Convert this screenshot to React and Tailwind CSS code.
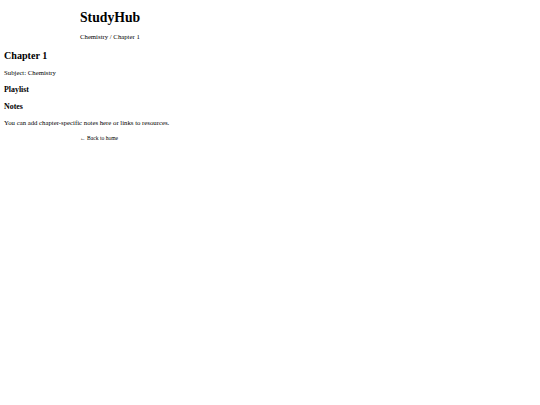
export default function App() {
  return (
    <div className="min-h-[405px] bg-white text-black font-['Liberation_Serif',serif]">
      <header className="pl-[80px]">
        <h1 className="pt-[10px] text-[13.7px] leading-[16px] font-bold">StudyHub</h1>
        <p className="mt-[7px] text-[6.75px] leading-[8px]">Chemistry / Chapter 1</p>
      </header>

      <main className="px-[4px]">
        <h2 className="mt-[9px] text-[10.1px] leading-[12px] font-bold">Chapter 1</h2>
        <p className="mt-[7px] text-[6.75px] leading-[8px]">Subject: Chemistry</p>

        <h3 className="mt-[7.5px] text-[7.9px] leading-[9px] font-bold">Playlist</h3>

        <h3 className="mt-[8px] text-[7.9px] leading-[9px] font-bold">Notes</h3>
        <p className="mt-[8.5px] text-[6.75px] leading-[8px]">
          You can add chapter-specific notes here or links to resources.
        </p>
      </main>

      <footer className="pl-[80px]">
        <a href="#" className="block mt-[7.5px] text-[5.6px] leading-[7px]">← Back to home</a>
      </footer>
    </div>
  )
}
